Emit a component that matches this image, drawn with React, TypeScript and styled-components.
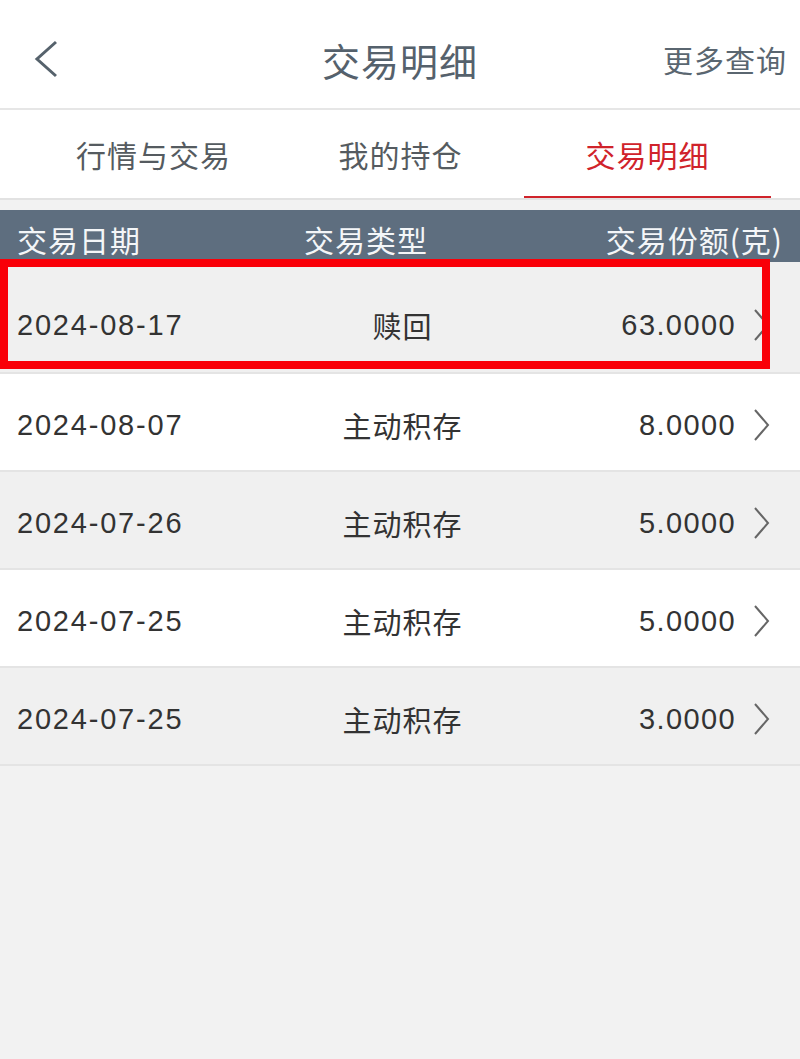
import React from 'react'
import styled, { createGlobalStyle } from 'styled-components'

const GlobalStyle = createGlobalStyle`
  html, body {
    margin: 0;
    padding: 0;
    background: #f2f2f2;
  }
  body {
    font-family: "Liberation Sans", "Noto Sans CJK SC", sans-serif;
  }
`

interface Record {
  date: string
  type: string
  amount: string
}

const records: Record[] = [
  { date: '2024-08-17', type: '赎回', amount: '63.0000' },
  { date: '2024-08-07', type: '主动积存', amount: '8.0000' },
  { date: '2024-07-26', type: '主动积存', amount: '5.0000' },
  { date: '2024-07-25', type: '主动积存', amount: '5.0000' },
  { date: '2024-07-25', type: '主动积存', amount: '3.0000' },
]

const tabs = ['行情与交易', '我的持仓', '交易明细']

const Page = styled.div`
  width: 800px;
  min-height: 1059px;
  background: #f2f2f2;
  position: relative;
`

const NavBar = styled.header`
  height: 110px;
  background: #fff;
  border-bottom: 2px solid #e6e6e6;
  display: grid;
  grid-template-columns: 160px 1fr 160px;
  align-items: center;
  padding-top: 10px;
  box-sizing: border-box;
`

const BackButton = styled.div`
  padding-left: 32px;
  display: flex;
  align-items: center;
`

const Title = styled.h1`
  margin: 0;
  text-align: center;
  font-family: "Noto Sans CJK SC", sans-serif;
  font-weight: 400;
  font-size: 38px;
  color: #55616c;
  letter-spacing: 1px;
`

const MoreLink = styled.a`
  justify-self: end;
  padding-right: 13px;
  font-family: "Noto Sans CJK SC", sans-serif;
  font-size: 30px;
  color: #5a6670;
  letter-spacing: 1px;
`

const TabBar = styled.nav`
  height: 90px;
  background: #fff;
  border-bottom: 2px solid #e2e2e2;
  display: grid;
  grid-template-columns: repeat(3, 247px);
  padding-left: 30px;
  box-sizing: border-box;
`

const Tab = styled.div<{ $active?: boolean }>`
  display: flex;
  align-items: center;
  justify-content: center;
  font-family: "Noto Sans CJK SC", sans-serif;
  font-size: 30px;
  letter-spacing: 1px;
  color: ${(p) => (p.$active ? '#d0232b' : '#555b60')};
  border-bottom: 2px solid ${(p) => (p.$active ? '#d0232b' : 'transparent')};
  padding-top: 2px;
`

const TableHeader = styled.div`
  margin-top: 10px;
  height: 52px;
  background: #5e6e7f;
  display: grid;
  grid-template-columns: 1fr 1fr 1fr;
  align-items: center;
  padding: 6px 17px 0;
  font-family: "Noto Sans CJK SC", sans-serif;
  font-size: 30px;
  letter-spacing: 1px;
  color: #f4f6f8;
  box-sizing: border-box;
`

const HeadCell = styled.div<{ $align: 'left' | 'center' | 'right' }>`
  text-align: ${(p) => p.$align};
  white-space: nowrap;
  margin-left: ${(p) => (p.$align === 'center' ? '-68px' : '0')};
`

const List = styled.div`
  position: relative;
`

const Row = styled.div<{ $shaded: boolean; $first?: boolean }>`
  height: ${(p) => (p.$first ? '112px' : '98px')};
  padding-top: ${(p) => (p.$first ? '16px' : '6px')};
  box-sizing: border-box;
  background: ${(p) => (p.$shaded ? '#f0f0f0' : '#ffffff')};
  border-bottom: 2px solid #e4e4e4;
  display: grid;
  grid-template-columns: 260px 1fr 300px;
  align-items: center;
  padding-left: 17px;
  padding-right: 30px;
  color: #333;
  font-size: 29px;
`

const DateCell = styled.div`
  letter-spacing: 1.8px;
`

const TypeCell = styled.div`
  text-align: center;
  font-family: "Noto Sans CJK SC", sans-serif;
  letter-spacing: 1px;
  margin-left: 58px;
`

const AmountCell = styled.div`
  display: flex;
  align-items: center;
  justify-content: flex-end;
  gap: 16px;
  letter-spacing: 1.4px;
`

const Highlight = styled.div`
  position: absolute;
  left: 0;
  top: -3px;
  width: 770px;
  height: 110px;
  border: 8px solid #f90008;
  box-sizing: border-box;
  pointer-events: none;
`

const BackIcon = () => (
  <svg width="28" height="40" viewBox="0 0 28 40">
    <path d="M24 3 L5 20 L24 37" fill="none" stroke="#56626c" strokeWidth="3" />
  </svg>
)

const Chevron = () => (
  <svg width="18" height="34" viewBox="0 0 18 34">
    <path d="M3 2 L16 17 L3 32" fill="none" stroke="#666" strokeWidth="2" />
  </svg>
)

export default function App() {
  return (
    <Page>
      <GlobalStyle />
      <NavBar>
        <BackButton>
          <BackIcon />
        </BackButton>
        <Title>交易明细</Title>
        <MoreLink>更多查询</MoreLink>
      </NavBar>
      <TabBar>
        {tabs.map((t, i) => (
          <Tab key={t} $active={i === 2}>
            {t}
          </Tab>
        ))}
      </TabBar>
      <TableHeader>
        <HeadCell $align="left">交易日期</HeadCell>
        <HeadCell $align="center">交易类型</HeadCell>
        <HeadCell $align="right">交易份额(克)</HeadCell>
      </TableHeader>
      <List>
        {records.map((r, i) => (
          <Row key={i} $shaded={i % 2 === 0} $first={i === 0}>
            <DateCell>{r.date}</DateCell>
            <TypeCell>{r.type}</TypeCell>
            <AmountCell>
              <span>{r.amount}</span>
              <Chevron />
            </AmountCell>
          </Row>
        ))}
        <Highlight />
      </List>
    </Page>
  )
}
